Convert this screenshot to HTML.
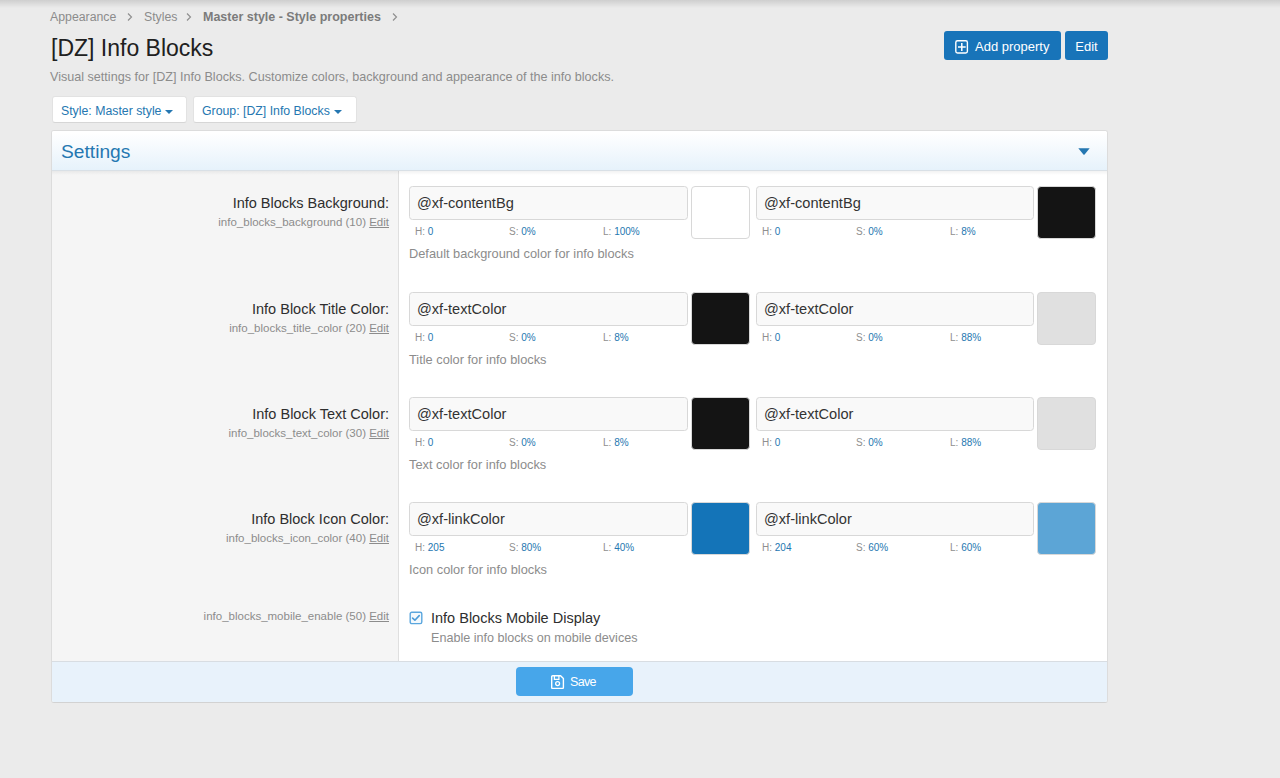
<!DOCTYPE html>
<html><head><meta charset="utf-8">
<style>
*{box-sizing:border-box;margin:0;padding:0}
html,body{width:1280px;height:778px;overflow:hidden}
body{background:#ebebeb;font-family:"Liberation Sans",sans-serif;color:#141414;position:relative}
.abs{position:absolute;white-space:nowrap}
.topsh{position:absolute;left:0;top:0;width:1280px;height:8px;background:linear-gradient(to bottom,rgba(0,0,0,.12),rgba(0,0,0,0))}
.crumb{font-size:12.3px;color:#8c8c8c;top:9px;line-height:16px}
.crumb b{font-size:12.5px}
.crumb b{color:#7b7b7b}
.title{font-size:23px;left:51px;top:33px;line-height:30px;color:#202020}
.desc{font-size:12.6px;left:50px;top:69px;color:#8c8c8c;line-height:16px}
.btn{position:absolute;background:#1874b9;color:#fff;border-radius:3px;font-size:13px;line-height:31px;text-align:center}
.fbtn{position:absolute;background:#fff;border:1px solid #e2e2e2;border-bottom-color:#d6d6d6;border-radius:3px;color:#2577b1;font-size:12.3px;line-height:28px;padding-left:8px}
.caret{display:inline-block;width:0;height:0;border-left:4px solid transparent;border-right:4px solid transparent;border-top:4px solid #2577b1;vertical-align:middle;margin-left:4px}
.block{position:absolute;left:51px;top:130px;width:1057px;height:573px;background:#fff;border:1px solid #dcdcdc;border-bottom-color:#d2d2d2;border-radius:3px;overflow:hidden}
.bhead{position:absolute;left:0;top:0;width:1055px;height:40px;background:linear-gradient(to bottom,#ffffff 5%,#e6f2fb);border-bottom:1px solid #d9e0e6}
.bhead .t{position:absolute;left:9px;top:9px;font-size:19.2px;color:#2577b1;line-height:24px}
.labcol{position:absolute;left:0;top:40px;width:347px;height:490px;background:#f5f5f5;border-right:1px solid #dfdfdf}
.lab{font-size:14.5px;color:#2e2e2e;text-align:right;line-height:18px}
.hint{font-size:11.5px;color:#8c8c8c;text-align:right;line-height:14px}
.hint u{color:#8c8c8c}
.inp{position:absolute;width:279px;height:34px;background:#f9f9f9;border:1px solid #d8d8d8;border-radius:3.5px;font-size:14.6px;line-height:32px;padding-left:7px;color:#333}
.sw{position:absolute;width:59px;height:53px;border:1px solid #d8d8d8;border-radius:4px}
.hsl{font-size:10px;color:#8f8f8f;line-height:12px}
.hsl span{color:#2577b1}
.exp{font-size:12.8px;color:#8c8c8c;line-height:16px}
.bfoot{position:absolute;left:0;top:530px;width:1055px;height:41px;background:#e8f2fb;border-top:1px solid #d8dde2}
.save{position:absolute;left:464px;top:4.5px;width:117px;height:29px;background:#47a6ea;border-radius:4px;color:#fff;font-size:12.5px;line-height:29px;letter-spacing:-0.7px}
</style></head><body>
<div class="topsh"></div>
<div class="abs crumb" style="left:50px">Appearance</div>
<svg class="abs" style="left:126px;top:12px" width="8" height="10" viewBox="0 0 8 10"><path d="M2 1.5L5.5 5L2 8.5" stroke="#8f8f8f" stroke-width="1.15" fill="none"/></svg>
<div class="abs crumb" style="left:144px">Styles</div>
<svg class="abs" style="left:185px;top:12px" width="8" height="10" viewBox="0 0 8 10"><path d="M2 1.5L5.5 5L2 8.5" stroke="#8f8f8f" stroke-width="1.15" fill="none"/></svg>
<div class="abs crumb" style="left:203px"><b>Master style - Style properties</b></div>
<svg class="abs" style="left:391px;top:12px" width="8" height="10" viewBox="0 0 8 10"><path d="M2 1.5L5.5 5L2 8.5" stroke="#8f8f8f" stroke-width="1.15" fill="none"/></svg>

<div class="abs title">[DZ] Info Blocks</div>
<div class="abs desc">Visual settings for [DZ] Info Blocks. Customize colors, background and appearance of the info blocks.</div>

<div class="btn" style="left:944px;top:31px;width:117px;height:29px"><svg style="position:absolute;left:10px;top:8px" width="15" height="15" viewBox="0 0 15 15"><rect x="1.8" y="1.8" width="11.6" height="12.2" rx="1.7" stroke="#fff" stroke-width="1.4" fill="none"/><path d="M7.8 4.1V12M4 7.9H11.7" stroke="#fff" stroke-width="1.5"/></svg><span style="position:absolute;left:31px;top:0">Add property</span></div>
<div class="btn" style="left:1065px;top:31px;width:43px;height:29px">Edit</div>

<div class="fbtn" style="left:52px;top:96px;width:135px;height:27px">Style: Master style<span class="caret"></span></div>
<div class="fbtn" style="left:193px;top:96px;width:164px;height:27px">Group: [DZ] Info Blocks<span class="caret"></span></div>

<div class="block">
  <div class="bhead"><div class="t">Settings</div>
    <svg style="position:absolute;left:1026px;top:17px" width="12" height="7" viewBox="0 0 12 7"><path d="M0.3 0.2H11.7L6.6 6.4Q6 7 5.4 6.4Z" fill="#2577b1"/></svg>
  </div>
  <div class="labcol"></div>
  <div style="position:absolute;left:0;top:40px;width:1055px;height:4px;background:linear-gradient(to bottom,rgba(0,0,0,.05),rgba(0,0,0,0))"></div>
  <div class="bfoot"><div class="save"><svg style="position:absolute;left:34.9px;top:8.6px" width="14" height="14" viewBox="0 0 14 14"><path d="M0.7 1.7Q0.7 0.7 1.7 0.7H9.6L12.4 3.5V12.5Q12.4 13.4 11.5 13.4H1.7Q0.7 13.4 0.7 12.4Z" stroke="#fff" stroke-width="1.4" fill="none" stroke-linejoin="round"/><path d="M3.4 0.8V4.3H7.9V0.8" stroke="#fff" stroke-width="1.25" fill="none"/><circle cx="6.6" cy="8.6" r="1.95" stroke="#fff" stroke-width="1.3" fill="none"/></svg><span style="position:absolute;left:54px;top:1px">Save</span></div></div>
</div>
<!--ROWS-->
<div class="abs lab" style="right:891px;top:194px">Info Blocks Background:</div>
<div class="abs hint" style="right:891px;top:215px">info_blocks_background (10) <u>Edit</u></div>
<div class="inp" style="left:409px;top:186px;width:279px">@xf-contentBg</div>
<div class="sw" style="left:691px;top:186px;background:#ffffff"></div>
<div class="abs hsl" style="left:415px;top:226px">H: <span>0</span></div>
<div class="abs hsl" style="left:509px;top:226px">S: <span>0%</span></div>
<div class="abs hsl" style="left:603px;top:226px">L: <span>100%</span></div>
<div class="inp" style="left:756px;top:186px;width:278px">@xf-contentBg</div>
<div class="sw" style="left:1037px;top:186px;background:#141414"></div>
<div class="abs hsl" style="left:762px;top:226px">H: <span>0</span></div>
<div class="abs hsl" style="left:856px;top:226px">S: <span>0%</span></div>
<div class="abs hsl" style="left:950px;top:226px">L: <span>8%</span></div>
<div class="abs exp" style="left:409px;top:246px">Default background color for info blocks</div>
<div class="abs lab" style="right:891px;top:300px">Info Block Title Color:</div>
<div class="abs hint" style="right:891px;top:321px">info_blocks_title_color (20) <u>Edit</u></div>
<div class="inp" style="left:409px;top:292px;width:279px">@xf-textColor</div>
<div class="sw" style="left:691px;top:292px;background:#141414"></div>
<div class="abs hsl" style="left:415px;top:332px">H: <span>0</span></div>
<div class="abs hsl" style="left:509px;top:332px">S: <span>0%</span></div>
<div class="abs hsl" style="left:603px;top:332px">L: <span>8%</span></div>
<div class="inp" style="left:756px;top:292px;width:278px">@xf-textColor</div>
<div class="sw" style="left:1037px;top:292px;background:#e0e0e0"></div>
<div class="abs hsl" style="left:762px;top:332px">H: <span>0</span></div>
<div class="abs hsl" style="left:856px;top:332px">S: <span>0%</span></div>
<div class="abs hsl" style="left:950px;top:332px">L: <span>88%</span></div>
<div class="abs exp" style="left:409px;top:352px">Title color for info blocks</div>
<div class="abs lab" style="right:891px;top:405px">Info Block Text Color:</div>
<div class="abs hint" style="right:891px;top:426px">info_blocks_text_color (30) <u>Edit</u></div>
<div class="inp" style="left:409px;top:397px;width:279px">@xf-textColor</div>
<div class="sw" style="left:691px;top:397px;background:#141414"></div>
<div class="abs hsl" style="left:415px;top:437px">H: <span>0</span></div>
<div class="abs hsl" style="left:509px;top:437px">S: <span>0%</span></div>
<div class="abs hsl" style="left:603px;top:437px">L: <span>8%</span></div>
<div class="inp" style="left:756px;top:397px;width:278px">@xf-textColor</div>
<div class="sw" style="left:1037px;top:397px;background:#e0e0e0"></div>
<div class="abs hsl" style="left:762px;top:437px">H: <span>0</span></div>
<div class="abs hsl" style="left:856px;top:437px">S: <span>0%</span></div>
<div class="abs hsl" style="left:950px;top:437px">L: <span>88%</span></div>
<div class="abs exp" style="left:409px;top:457px">Text color for info blocks</div>
<div class="abs lab" style="right:891px;top:510px">Info Block Icon Color:</div>
<div class="abs hint" style="right:891px;top:531px">info_blocks_icon_color (40) <u>Edit</u></div>
<div class="inp" style="left:409px;top:502px;width:279px">@xf-linkColor</div>
<div class="sw" style="left:691px;top:502px;background:#1474b8"></div>
<div class="abs hsl" style="left:415px;top:542px">H: <span>205</span></div>
<div class="abs hsl" style="left:509px;top:542px">S: <span>80%</span></div>
<div class="abs hsl" style="left:603px;top:542px">L: <span>40%</span></div>
<div class="inp" style="left:756px;top:502px;width:278px">@xf-linkColor</div>
<div class="sw" style="left:1037px;top:502px;background:#5ca5d6"></div>
<div class="abs hsl" style="left:762px;top:542px">H: <span>204</span></div>
<div class="abs hsl" style="left:856px;top:542px">S: <span>60%</span></div>
<div class="abs hsl" style="left:950px;top:542px">L: <span>60%</span></div>
<div class="abs exp" style="left:409px;top:562px">Icon color for info blocks</div>
<div class="abs hint" style="right:891px;top:609px">info_blocks_mobile_enable (50) <u>Edit</u></div>
<svg class="abs" style="left:408.5px;top:611px" width="14" height="14" viewBox="0 0 14 14"><rect x="1.2" y="1.2" width="11.6" height="11.4" rx="1.6" fill="#f3f9fd" stroke="#5aa6de" stroke-width="1.4"/><path d="M3.6 7.1L5.9 9.2L10.2 4.6" stroke="#4b9bd8" stroke-width="1.6" fill="none" stroke-linecap="round" stroke-linejoin="round"/></svg>
<div class="abs lab" style="left:431px;top:609px;text-align:left">Info Blocks Mobile Display</div>
<div class="abs exp" style="left:431px;top:630px;font-size:12.6px">Enable info blocks on mobile devices</div>
<!--/ROWS-->
</body></html>
